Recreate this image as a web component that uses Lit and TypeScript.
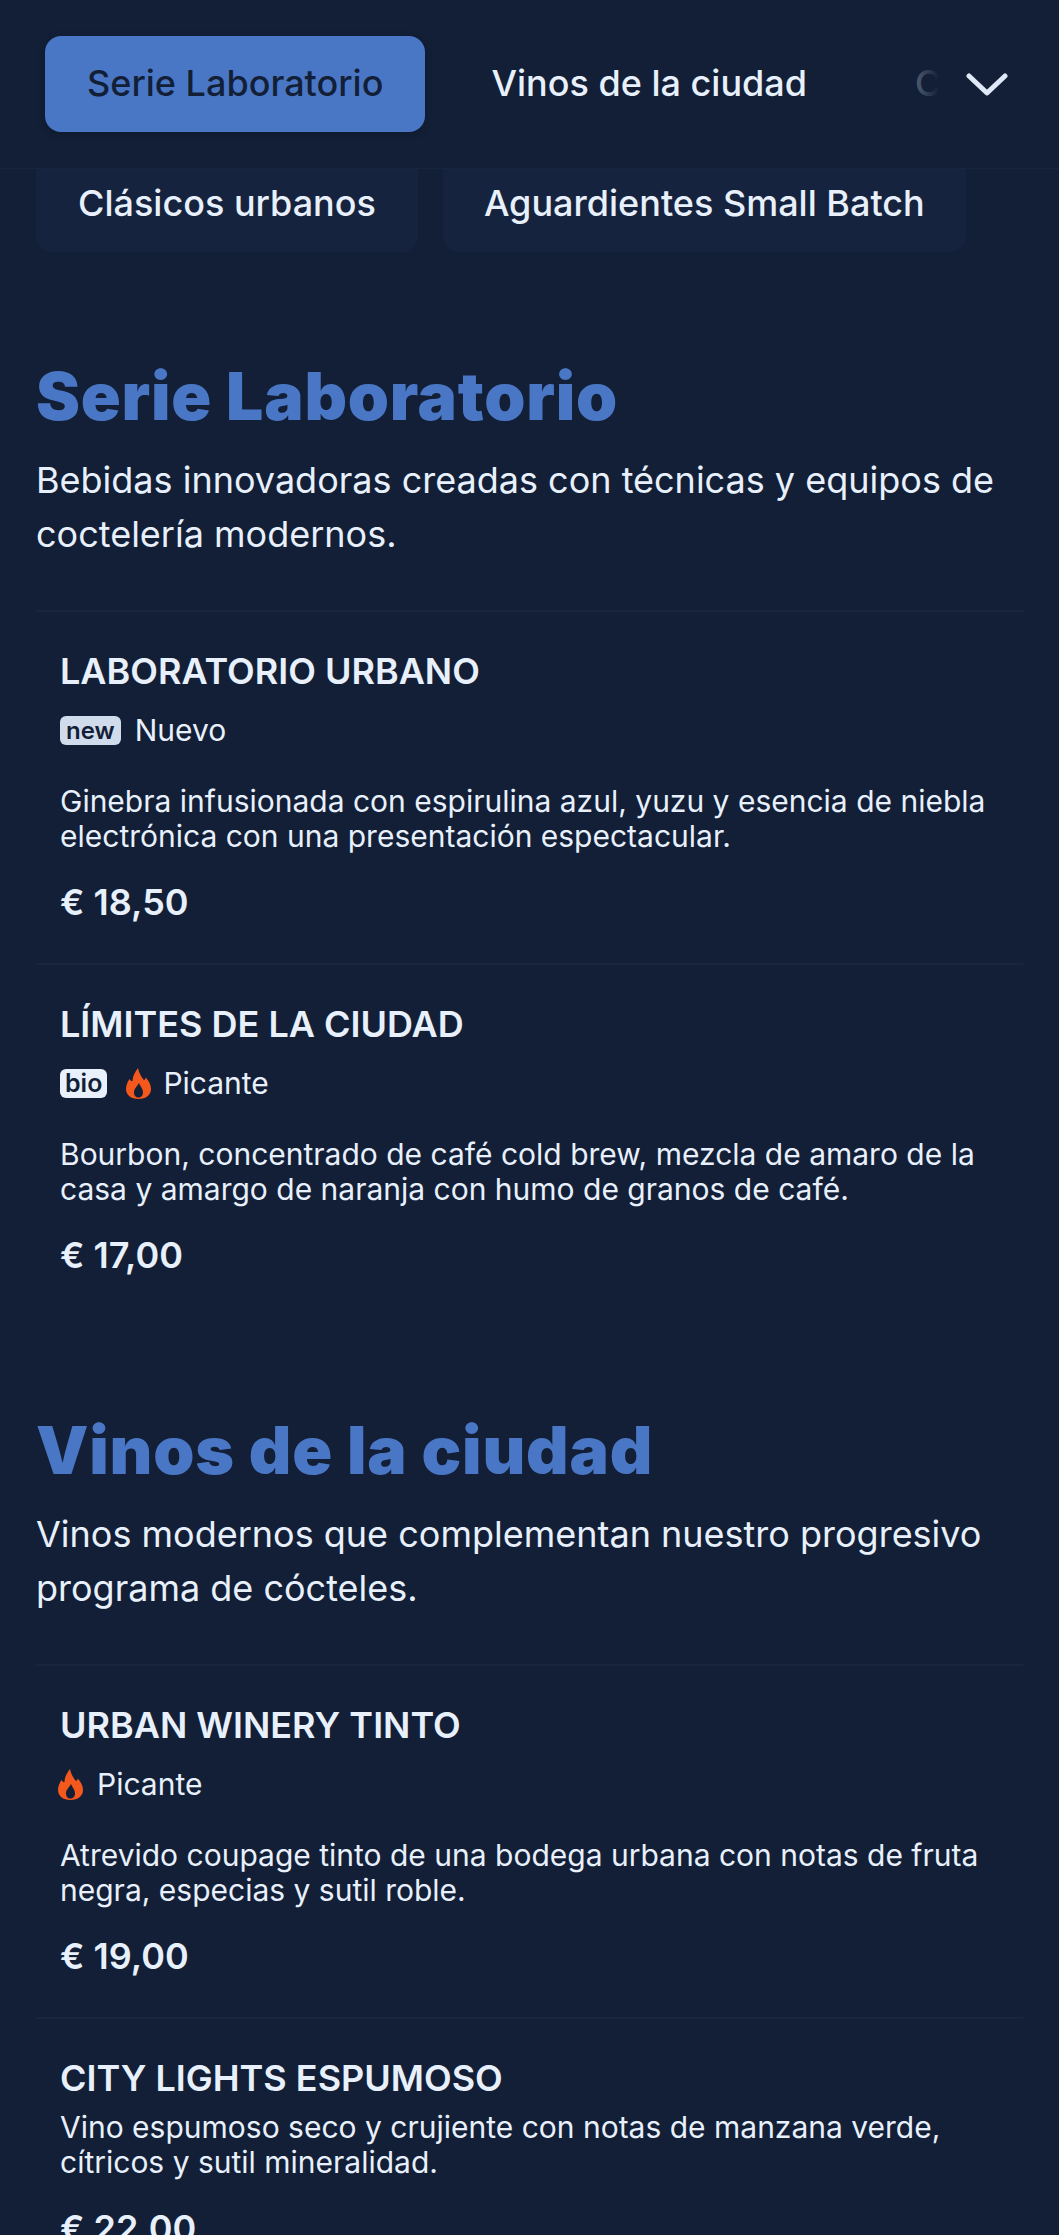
import { LitElement, html, css } from "lit";
import { customElement } from "lit/decorators.js";

const flame = html`<svg class="flame" viewBox="0 0 25 31" aria-hidden="true"><path fill="#f4581c" fill-rule="evenodd" d="M12 0C13 5 15 8 17 11 18.200 12.500 19.200 12 19.800 9.500 23 13 25 17 25 21 25 27 20 31 12.500 31 5 31 0 27 0 21 0 17 1.500 14 3.500 11 4.500 12.500 5.500 13.500 6.500 13 6.500 8 9 4 12 0ZM13 15C11.500 18 8 20.500 8 24.500 8 27.500 10 29.500 12.500 29.500 15 29.500 17 27.500 17 24.500 17 20.500 14 18 13 15Z"/></svg>`;

type Item = { name: string; tags?: unknown; desc: string[]; price: string };

const sections: { title: string; desc: string[]; items: Item[] }[] = [
  {
    title: "Serie Laboratorio",
    desc: ["Bebidas innovadoras creadas con técnicas y equipos de", "coctelería modernos."],
    items: [
      {
        name: "LABORATORIO URBANO",
        tags: html`<span class="badge new">new</span><span>Nuevo</span>`,
        desc: ["Ginebra infusionada con espirulina azul, yuzu y esencia de niebla", "electrónica con una presentación espectacular."],
        price: "€ 18,50",
      },
      {
        name: "LÍMITES DE LA CIUDAD",
        tags: html`<span class="badge bio">bio</span>${flame}<span>Picante</span>`,
        desc: ["Bourbon, concentrado de café cold brew, mezcla de amaro de la", "casa y amargo de naranja con humo de granos de café."],
        price: "€ 17,00",
      },
    ],
  },
  {
    title: "Vinos de la ciudad",
    desc: ["Vinos modernos que complementan nuestro progresivo", "programa de cócteles."],
    items: [
      {
        name: "URBAN WINERY TINTO",
        tags: html`${flame}<span>Picante</span>`,
        desc: ["Atrevido coupage tinto de una bodega urbana con notas de fruta", "negra, especias y sutil roble."],
        price: "€ 19,00",
      },
      {
        name: "CITY LIGHTS ESPUMOSO",
        desc: ["Vino espumoso seco y crujiente con notas de manzana verde,", "cítricos y sutil mineralidad."],
        price: "€ 22,00",
      },
    ],
  },
];

@customElement("app-root")
export class AppRoot extends LitElement {
  static styles = css`
    :host {
      display: block;
      height: 2235px;
      overflow: hidden;
      background: #121f37;
      color: #e8f0fb;
      font-family: Inter, "Liberation Sans", sans-serif;
    }
    .top {
      position: relative;
      height: 168px;
      border-bottom: 1px solid #18253e;
      box-sizing: content-box;
      overflow: hidden;
    }
    .tabs {
      display: flex;
      align-items: center;
      gap: 24px;
      height: 100%;
      padding-left: 45px;
      white-space: nowrap;
    }
    .tab {
      font-size: 36px;
      font-weight: 500;
      padding: 0 42px;
      height: 96px;
      display: flex;
      align-items: center;
      border-radius: 16px;
      padding-bottom: 3px;
      box-sizing: border-box;
    }
    .tab.active {
      background: #4a77c5;
      color: #121f37;
      box-shadow: 0 2px 8px rgba(0, 0, 0, 0.2);
    }
    .fade {
      position: absolute;
      top: 0;
      right: 0;
      bottom: 0;
      width: 150px;
      display: flex;
      align-items: center;
      justify-content: flex-end;
      padding-right: 51px;
      box-sizing: border-box;
      background: linear-gradient(to right, rgba(18, 31, 55, 0) 0%, rgba(18, 31, 55, 0.72) 5%, #121f37 20%);
    }
    .chev {
      width: 42px;
      height: 23px;
      display: block;
    }
    .sub {
      height: 83px;
      display: flex;
      align-items: flex-end;
      gap: 25px;
      padding-left: 36px;
      overflow: hidden;
    }
    .pill {
      flex: none;
      height: 110px;
      padding: 0 42px 27px;
      box-sizing: border-box;
      background: #16233e;
      border-radius: 16px;
      font-size: 36px;
      font-weight: 500;
      display: flex;
      align-items: flex-end;
      line-height: 44px;
    }
    .pill + .pill {
      padding-left: 41px;
      padding-right: 41px;
    }
    main {
      padding: 0 36px;
    }
    h2 {
      margin: 0;
      font-family: Inter, sans-serif;
      font-weight: 900;
      font-size: 66px;
      line-height: 80px;
      color: #4a77c5;
      letter-spacing: 0.8px;
    }
    .first {
      padding-top: 104px;
    }
    .second {
      padding-top: 94px;
    }
    .lede {
      margin: 18px 0 0;
      font-size: 36px;
      line-height: 53.5px;
      font-weight: 400;
      padding-bottom: 49px;
      border-bottom: 2px solid #18253e;
    }
    .lede div,
    .desc div {
      white-space: nowrap;
    }
    .item {
      padding: 37px 24px 39px;
      border-bottom: 2px solid #18253e;
    }
    .item:last-child {
      border-bottom: none;
    }
    h3 {
      margin: 0;
      font-size: 36px;
      line-height: 44px;
      font-weight: 600;
    }
    .tags {
      display: flex;
      align-items: center;
      gap: 14px;
      margin-top: 15px;
      font-size: 30px;
      line-height: 44px;
      height: 44px;
    }
    .badge {
      font-size: 24px;
      font-weight: 600;
      line-height: 29px;
      padding: 0 6px;
      border-radius: 6px;
      color: #121f37;
    }
    .badge.new {
      background: #d0dcec;
    }
    .badge.bio {
      background: #e8f0fb;
      font-size: 25px;
      padding: 0 5px;
    }
    .flame {
      width: 25px;
      height: 31px;
      display: block;
      margin-left: -2px;
    }
    .badge + .flame {
      margin-left: 5px;
      margin-right: -2px;
    }
    .desc {
      font-size: 30px;
      line-height: 35px;
      margin-top: 32px;
    }
    .notags .desc {
      margin-top: 10px;
    }
    .price {
      margin-top: 26px;
      font-size: 36px;
      font-weight: 600;
      line-height: 44px;
    }
  `;

  render() {
    return html`
      <div class="top">
        <div class="tabs">
          <div class="tab active">Serie Laboratorio</div>
          <div class="tab">Vinos de la ciudad</div>
          <div class="tab">Clásicos urbanos</div>
        </div>
        <div class="fade">
          <svg class="chev" viewBox="0 0 42 23" fill="none" stroke="#dfe8f6" stroke-width="5" stroke-linecap="round" stroke-linejoin="round">
            <path d="M3 3l18 17L39 3" />
          </svg>
        </div>
      </div>
      <div class="sub">
        <div class="pill">Clásicos urbanos</div>
        <div class="pill">Aguardientes Small Batch</div>
      </div>
      <main>
        ${sections.map(
          (s, i) => html`
            <section class=${i === 0 ? "first" : "second"}>
              <h2>${s.title}</h2>
              <div class="lede">${s.desc.map((l) => html`<div>${l}</div>`)}</div>
              ${s.items.map(
                (it) => html`
                  <article class="item ${it.tags ? "" : "notags"}">
                    <h3>${it.name}</h3>
                    ${it.tags ? html`<div class="tags">${it.tags}</div>` : ""}
                    <div class="desc">${it.desc.map((l) => html`<div>${l}</div>`)}</div>
                    <div class="price">${it.price}</div>
                  </article>
                `
              )}
            </section>
          `
        )}
      </main>
    `;
  }
}
